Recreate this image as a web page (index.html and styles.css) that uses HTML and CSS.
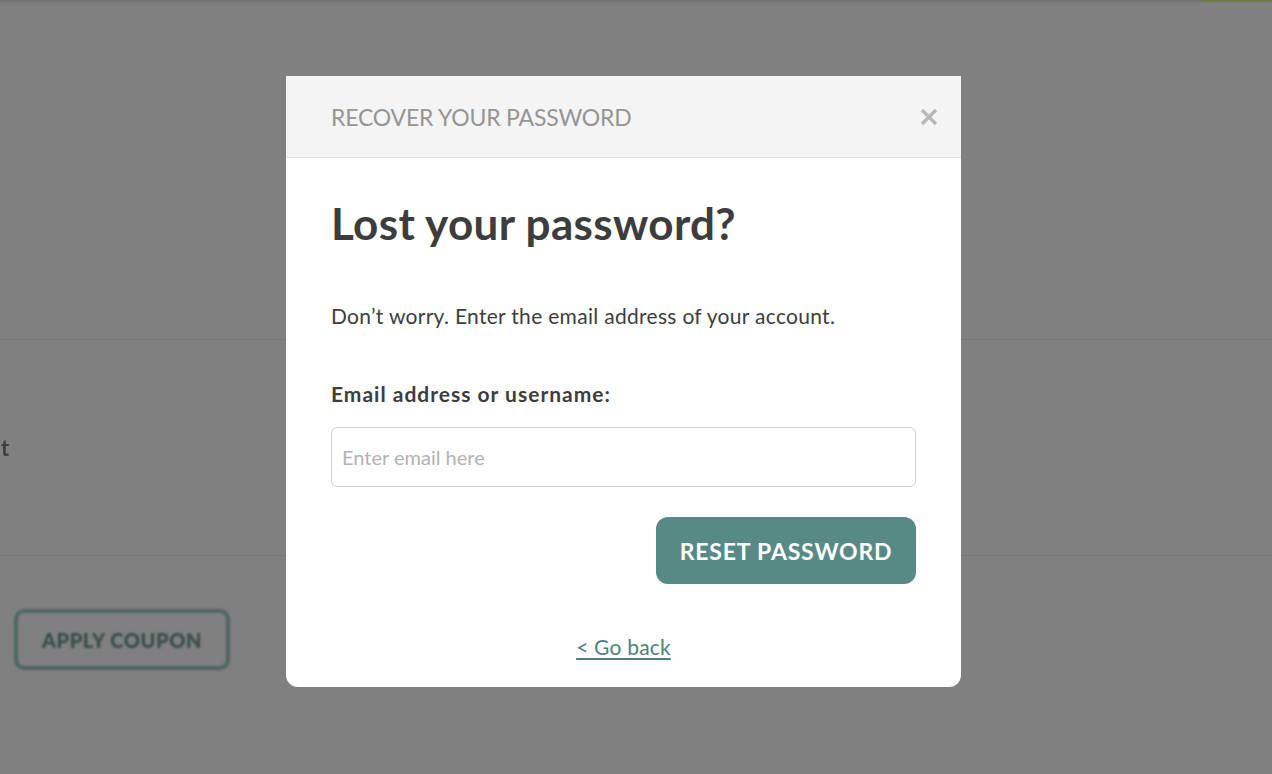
FILE: index.html
```html
<!DOCTYPE html>
<html lang="en">
<head>
<meta charset="utf-8">
<title>Recover your password</title>
<link rel="stylesheet" href="styles.css">
</head>
<body>
<div class="page">
  <div class="topbar"><span class="accent"></span></div>
  <div class="band band-1"></div>
  <div class="band band-2"><span class="cut">t</span></div>
  <div class="band band-3">
    <button class="coupon" type="button">APPLY COUPON</button>
  </div>
</div>

<div class="overlay">
  <div class="modal" role="dialog" aria-labelledby="modal-title">
    <div class="modal-header">
      <h2 id="modal-title" class="modal-title">RECOVER YOUR PASSWORD</h2>
      <button class="close" type="button" aria-label="Close">
        <svg width="18" height="18" viewBox="0 0 18 18"><path d="M2 2 L16 16 M16 2 L2 16" stroke="#b9b9b9" stroke-width="3.4" stroke-linecap="butt"/></svg>
      </button>
    </div>
    <div class="modal-body">
      <h1 class="heading">Lost your password?</h1>
      <p class="intro">Don’t worry. Enter the email address of your account.</p>
      <label class="label" for="email">Email address or username:</label>
      <input class="input" id="email" type="text" placeholder="Enter email here">
      <div class="actions">
        <button class="reset" type="button">RESET PASSWORD</button>
      </div>
      <div class="back-row"><a class="back" href="#">&lt; Go back</a></div>
    </div>
  </div>
</div>
</body>
</html>
```
FILE: styles.css
```css
* { box-sizing: border-box; }
html, body { margin: 0; padding: 0; }
body {
  width: 1272px;
  height: 774px;
  overflow: hidden;
  background: #808080;
  font-family: "Lato", "Noto Sans", sans-serif;
  position: relative;
}
.page {
  display: flex;
  flex-direction: column;
}
.topbar {
  height: 4px;
  background: linear-gradient(#6f6f6f, #7c7c7c 60%, #808080);
  display: flex;
  justify-content: flex-end;
}
.accent {
  width: 70px;
  height: 2px;
  background: #6d7a4c;
}
.band { border-bottom: 1px solid #787878; }
.band-1 { height: 336px; }
.band-2 {
  height: 216px;
  display: flex;
  align-items: center;
}
.cut {
  font-size: 22px;
  font-weight: 700;
  color: #3e3e3e;
  margin-left: 1px;
  filter: blur(0.6px);
}
.band-3 {
  border-bottom: none;
  padding: 53px 0 0 14px;
}
.coupon {
  width: 216px;
  height: 61px;
  border: 4px solid #4d6662;
  border-radius: 10px;
  background: transparent;
  color: #354b48;
  font-family: "Lato", sans-serif;
  font-weight: 900;
  font-size: 20px;
  letter-spacing: 0.6px;
  filter: blur(1.1px);
}
.overlay {
  position: absolute;
  inset: 0;
}
.modal {
  position: absolute;
  left: 286px;
  top: 76px;
  width: 675px;
  background: #fff;
  border-radius: 0 0 12px 12px;
  overflow: hidden;
}
.modal-header {
  height: 82px;
  background: #f4f4f4;
  border-bottom: 1px solid #e2e2e2;
  display: flex;
  align-items: center;
  justify-content: space-between;
  padding: 0 23px 0 45px;
}
.modal-title {
  margin: 0;
  font-size: 23px;
  font-weight: 400;
  color: #959595;
  letter-spacing: -0.2px;
}
.close {
  border: 0;
  background: none;
  padding: 0;
  width: 18px;
  height: 18px;
  display: flex;
}
.modal-body {
  padding: 37px 45px 26px;
  display: flex;
  flex-direction: column;
}
.heading {
  margin: 0;
  font-size: 44px;
  font-weight: 700;
  color: #3d3d3d;
  line-height: 56px;
  letter-spacing: 0.35px;
}
.intro {
  margin: 51px 0 0;
  font-size: 21px;
  color: #3d3d3d;
  line-height: 28px;
  letter-spacing: 0.3px;
}
.label {
  margin-top: 50px;
  font-size: 21px;
  font-weight: 700;
  color: #3d3d3d;
  line-height: 28px;
  letter-spacing: 1px;
}
.input {
  margin-top: 19px;
  height: 60px;
  border: 1px solid #cfcfcf;
  border-radius: 6px;
  padding: 0 10px;
  font-family: inherit;
  font-size: 20px;
  color: #3d3d3d;
}
.input::placeholder { color: #b3b3b3; }
.actions {
  margin-top: 30px;
  display: flex;
  justify-content: flex-end;
}
.reset {
  width: 260px;
  height: 67px;
  border: 0;
  border-radius: 12px;
  background: #578a84;
  color: #fff;
  font-family: inherit;
  font-size: 23px;
  font-weight: 700;
  letter-spacing: 0.8px;
}
.back-row {
  margin-top: 49px;
  display: flex;
  justify-content: center;
}
.back {
  font-size: 21px;
  color: #4f807a;
  text-decoration: underline;
  text-underline-offset: 3px;
  line-height: 28px;
  letter-spacing: 0.2px;
}
```
